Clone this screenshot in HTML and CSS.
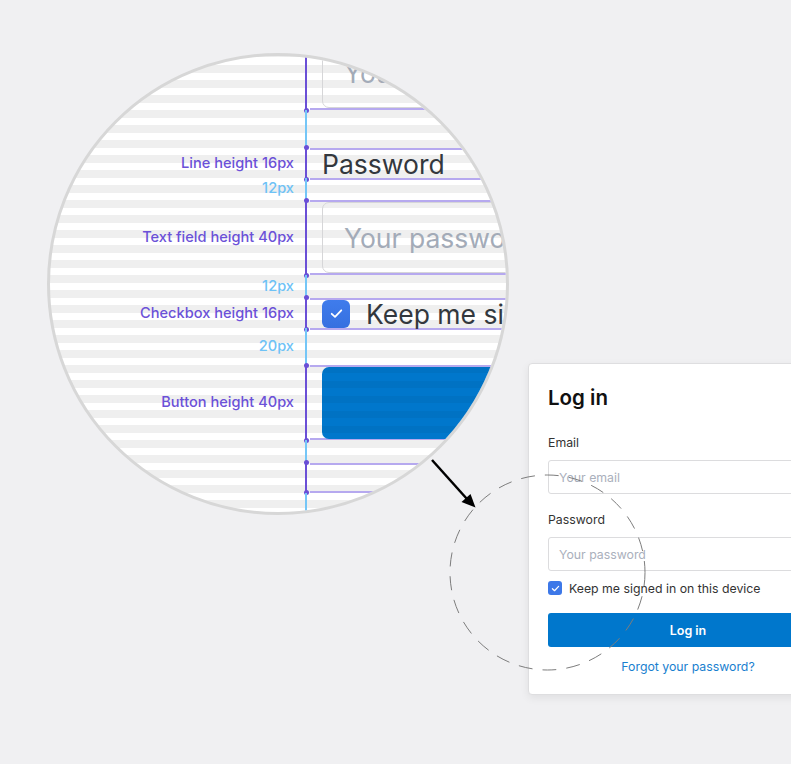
FILE: index.html
```html
<!DOCTYPE html>
<html lang="en">
<head>
<meta charset="utf-8">
<title>Log in spacing</title>
<link rel="stylesheet" href="styles.css">
</head>
<body>
<div class="canvas">
  <div class="lens">
    <div class="spec">
      <div class="row el h40">
        <div class="lbl"></div><div class="rail"></div>
        <div class="cnt"><div class="mfield"><span class="mph">Your email</span></div></div>
      </div>
      <div class="row gap g20"><div class="lbl"></div><div class="rail"></div><div class="cnt"></div></div>
      <div class="row el h16">
        <div class="lbl">Line height 16px</div><div class="rail"></div>
        <div class="cnt"><span class="mtext">Password</span></div>
      </div>
      <div class="row gap g12"><div class="lbl">12px</div><div class="rail"></div><div class="cnt"></div></div>
      <div class="row el h40">
        <div class="lbl">Text field height 40px</div><div class="rail"></div>
        <div class="cnt"><div class="mfield"><span class="mph">Your password</span></div></div>
      </div>
      <div class="row gap g12"><div class="lbl">12px</div><div class="rail"></div><div class="cnt"></div></div>
      <div class="row el h16">
        <div class="lbl">Checkbox height 16px</div><div class="rail"></div>
        <div class="cnt">
          <span class="mbox"><svg viewBox="0 0 16 16" width="17" height="17"><polyline points="3.5,8.3 6.6,11.2 12.5,5" fill="none" stroke="#fff" stroke-width="1.7" stroke-linecap="round" stroke-linejoin="round"/></svg></span>
          <span class="mtext">Keep me signed in on this device</span>
        </div>
      </div>
      <div class="row gap g20"><div class="lbl">20px</div><div class="rail"></div><div class="cnt"></div></div>
      <div class="row el h40">
        <div class="lbl">Button height 40px</div><div class="rail"></div>
        <div class="cnt"><div class="mbtn"></div></div>
      </div>
      <div class="row gap g12"><div class="lbl"></div><div class="rail"></div><div class="cnt"></div></div>
      <div class="row el h16"><div class="lbl"></div><div class="rail"></div><div class="cnt"></div></div>
      <div class="row gap g40"><div class="lbl"></div><div class="rail"></div><div class="cnt"></div></div>
    </div>
  </div>

  <div class="card">
    <h1 class="card-title">Log in</h1>
    <div class="flabel first">Email</div>
    <div class="input">Your email</div>
    <div class="flabel">Password</div>
    <div class="input">Your password</div>
    <div class="check-row">
      <span class="box"><svg viewBox="0 0 16 16" width="11" height="11"><polyline points="3.5,8.3 6.6,11.2 12.5,5" fill="none" stroke="#fff" stroke-width="1.8" stroke-linecap="round" stroke-linejoin="round"/></svg></span>
      <span>Keep me signed in on this device</span>
    </div>
    <div class="btn">Log in</div>
    <div class="forgot">Forgot your password?</div>
  </div>

  <svg class="overlay" width="791" height="764" viewBox="0 0 791 764">
    <circle cx="547.5" cy="572.5" r="97.5" fill="none" stroke="#7d7d7d" stroke-width="1" stroke-dasharray="14 10"/>
    <line x1="432" y1="460" x2="467" y2="499" stroke="#000" stroke-width="2.5"/>
    <polygon points="475.5,507.5 461.5,502 470.5,494" fill="#000"/>
  </svg>
</div>
</body>
</html>
```

FILE: styles.css
```css
html, body {
  margin: 0;
  padding: 0;
}
body {
  width: 791px;
  height: 764px;
  overflow: hidden;
  background: #f0f0f2;
  font-family: "Inter", "Liberation Sans", sans-serif;
}
.canvas {
  position: relative;
  width: 791px;
  height: 764px;
  overflow: hidden;
}

/* magnifier */
.lens {
  position: absolute;
  left: 47px;
  top: 53px;
  width: 462px;
  height: 462px;
  box-sizing: border-box;
  border: 3px solid #d7d7d7;
  border-radius: 50%;
  overflow: hidden;
  background: repeating-linear-gradient(180deg, #efefef 0 1.5px, #ffffff 1.5px 9px, #efefef 9px 15px);
}
.spec {
  margin-top: -21px;
  display: flex;
  flex-direction: column;
}
.row {
  display: grid;
  grid-template-columns: 252px 8px 1fr;
}
.h40 { height: 75px; }
.h16 { height: 30px; }
.g12 { height: 22.5px; }
.g20 { height: 37.5px; }
.g40 { height: 75px; }

.lbl {
  align-self: center;
  text-align: right;
  padding-right: 8px;
  padding-bottom: 1px;
  font-size: 14.6px;
  font-weight: 500;
  line-height: 16px;
  white-space: nowrap;
}
.el .lbl { color: #6b51d8; }
.gap .lbl { color: #6ec2f6; }

.rail {
  position: relative;
}
.el .rail {
  background: linear-gradient(#6a4fd6, #6a4fd6) center / 2px 100% no-repeat;
}
.gap .rail {
  background: linear-gradient(#74c6f7, #74c6f7) center / 2px 100% no-repeat;
}
.el .rail::before,
.el .rail::after {
  content: "";
  position: absolute;
  left: 1.5px;
  width: 5px;
  height: 5px;
  border-radius: 50%;
  background: #6a4fd6;
}
.el .rail::before { top: -2.5px; }
.el .rail::after { bottom: -2.5px; }

.cnt {
  display: flex;
  align-items: center;
  padding-left: 12px;
  min-width: 0;
  white-space: nowrap;
}
.el .cnt {
  background:
    linear-gradient(#b6a9ef, #b6a9ef) top / 100% 2px no-repeat,
    linear-gradient(#b6a9ef, #b6a9ef) bottom / 100% 2px no-repeat;
}
.mfield {
  flex: none;
  width: 400px;
  height: 71px;
  box-sizing: border-box;
  border: 1.5px solid #d6d6d8;
  border-radius: 7px;
  display: flex;
  align-items: center;
  padding-left: 21px;
}
.mph {
  font-size: 26.5px;
  color: #a3abb8;
}
.mtext {
  font-size: 26.5px;
  color: #33383e;
}
.mbox {
  flex: none;
  width: 28px;
  height: 28px;
  border-radius: 6px;
  background: linear-gradient(#3f7cec, #3670e0);
  display: flex;
  align-items: center;
  justify-content: center;
  margin-right: 16px;
}
.mbtn {
  flex: none;
  width: 400px;
  height: 72px;
  border-radius: 7px;
  background:
    repeating-linear-gradient(180deg, rgba(0,0,0,0.045) 0 6.5px, rgba(0,0,0,0) 6.5px 14px, rgba(0,0,0,0.045) 14px 15px),
    #0077cc;
}

/* real card */
.card {
  position: absolute;
  left: 528px;
  top: 363px;
  width: 320px;
  box-sizing: border-box;
  background: #fff;
  border: 1px solid #dedee0;
  border-radius: 4px;
  box-shadow: 0 3px 8px rgba(0, 0, 0, 0.07);
  padding: 20px 19px 20px;
}
.card-title {
  margin: 0;
  font-size: 20.5px;
  line-height: 28px;
  font-weight: 600;
  color: #111;
}
.flabel {
  margin-top: 19px;
  font-size: 12.3px;
  line-height: 14px;
  color: #333;
}
.flabel.first { margin-top: 24px; }
.input {
  margin-top: 10px;
  height: 34px;
  box-sizing: border-box;
  border: 1px solid #dcdcde;
  border-radius: 3px;
  padding-left: 10px;
  display: flex;
  align-items: center;
  font-size: 12.3px;
  color: #aab0bc;
}
.check-row {
  margin-top: 10px;
  height: 14px;
  display: flex;
  align-items: center;
  gap: 7px;
  font-size: 12.3px;
  color: #333;
}
.box {
  width: 14px;
  height: 14px;
  border-radius: 3px;
  background: #3d78e8;
  display: flex;
  align-items: center;
  justify-content: center;
}
.btn {
  margin-top: 18px;
  height: 34px;
  border-radius: 3px;
  background: #0077cc;
  color: #fff;
  font-size: 12.5px;
  font-weight: 600;
  display: flex;
  align-items: center;
  justify-content: center;
}
.forgot {
  margin-top: 13px;
  text-align: center;
  font-size: 12.3px;
  line-height: 14px;
  color: #1a7fcf;
}

.overlay {
  position: absolute;
  left: 0;
  top: 0;
  pointer-events: none;
}
```
